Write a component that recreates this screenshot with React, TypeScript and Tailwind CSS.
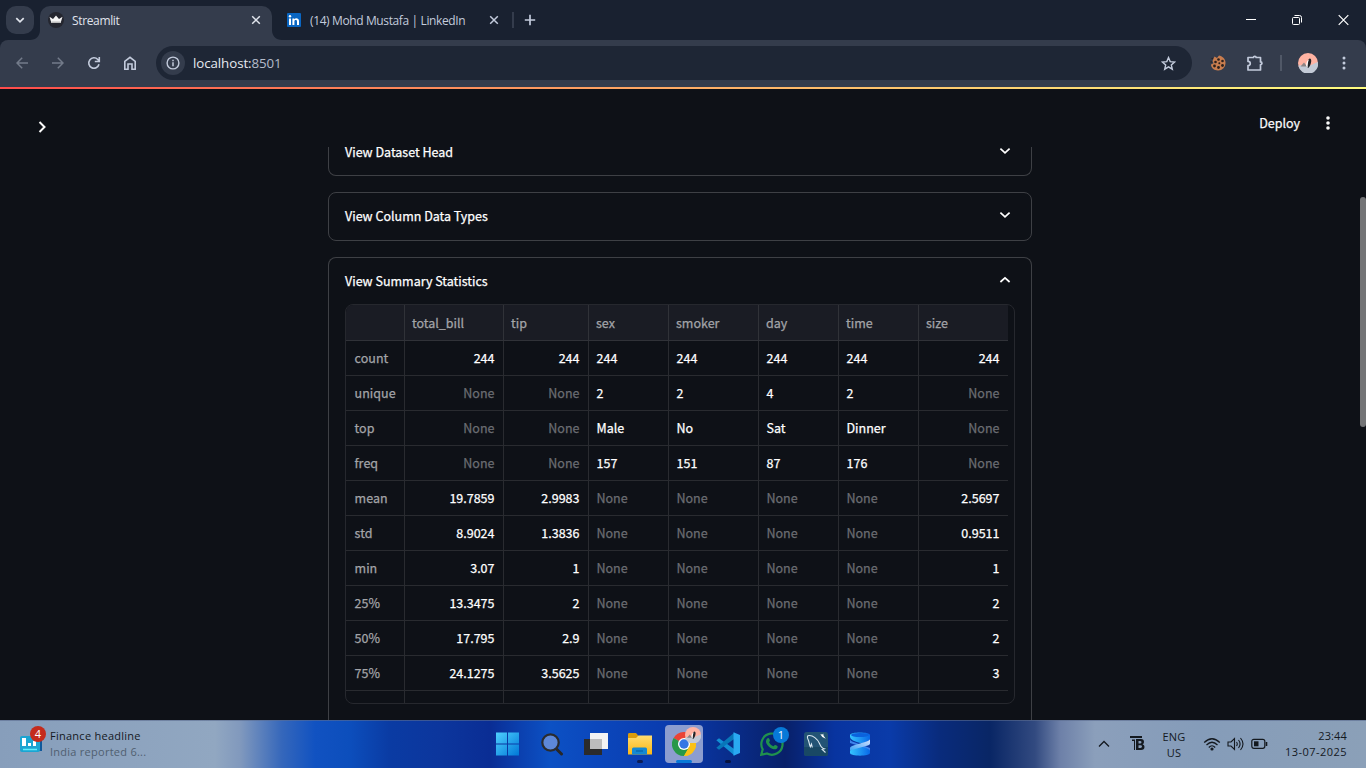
import React from "react";

const ICON = "fill-none stroke-current";

const Chevron = ({ up = false }: { up?: boolean }) => (
  <svg className={ICON} width="12" height="8" viewBox="0 0 12 8" strokeWidth="1.7">
    <path d={up ? "M1.4 6 6 1.8 10.6 6" : "M1.4 1.7 6 5.9 10.6 1.7"} />
  </svg>
);

const Close = () => (
  <svg className={ICON} width="10" height="10" viewBox="0 0 10 10" strokeWidth="1.5">
    <path d="M1.2 1.2 8.8 8.8M8.8 1.2 1.2 8.8" />
  </svg>
);

const Dots = ({ r, gap }: { r: number; gap: number }) => (
  <svg className="fill-current" width="6" height="18" viewBox="0 0 6 18">
    {[-1, 0, 1].map((i) => (
      <circle key={i} cx="3" cy={9 + i * gap} r={r} />
    ))}
  </svg>
);

const Avatar = ({ size }: { size: number }) => (
  <svg width={size} height={size} viewBox="0 0 20 20">
    <circle cx="10" cy="10" r="10" fill="#ffb3a3" />
    <path d="M.3 12.500C3 12.500 6 11.500 9 12.500S16 10.500 20 9A10 10 0 0 1 .3 12.500" fill="#c3cad6" />
    <path d="M2.500 13.500 6 9.500l3 4z" fill="#8c8485" />
    <path d="M10.500 6.500c1.500-2 3-.5 2.700 2-.4 3-1.300 5-3 6.500-1-.5-1.100-2-.6-4.500.3-2.200.4-3 .9-4" fill="#222529" />
    <path d="M10.900 6.800c-.9 2-1.400 4.600-1.300 7.700-1.700-1-1.700-3-1-5 .5-1.400 1.100-2.300 2.300-2.700" fill="#fff" />
  </svg>
);

function TabStrip() {
  return (
    <div className="flex h-10 shrink-0 items-start bg-[#192130] text-[12px] text-[#e0e4ec]">
      <button className="ml-[6px] mt-[6px] flex size-7 items-center justify-center rounded-[10px] bg-[#343c4c]">
        <svg className={ICON} width="10" height="7" viewBox="0 0 10 7" strokeWidth="1.7">
          <path d="M1.3 1.2 5 4.900 8.700 1.200" />
        </svg>
      </button>
      <svg className="ml-[-4px] mt-[30px] shrink-0" width="10" height="10" viewBox="0 0 10 10">
        <path d="M10 0v10H0C6 10 10 6 10 0" fill="#343c4c" />
      </svg>
      <div className="mt-[6px] flex h-[34px] w-[232px] items-center rounded-t-[10px] bg-[#343c4c] pb-[6px] pl-2 pr-[11px]">
        <svg width="16" height="16" viewBox="0 0 16 16">
          <circle cx="8" cy="8" r="8" fill="#24262f" />
          <path d="M1.500 4.800 5 7l3-3.500L11 7l3.500-2.200L12.600 11H3.400z" fill="#f5f5f5" />
          <path d="M3.400 9.500h9.200V11H3.400z" fill="#bbb" />
        </svg>
        <span className="ml-2 pt-px tracking-[-0.35px]">Streamlit</span>
        <span className="ml-auto"><Close /></span>
      </div>
      <svg className="mt-[30px] shrink-0" width="10" height="10" viewBox="0 0 10 10">
        <path d="M0 0v10h10C4 10 0 6 0 0" fill="#343c4c" />
      </svg>
      <div className="ml-[5px] mt-[6px] flex h-7 w-[225px] items-center text-[#c3cbdc]">
        <svg width="14" height="14" viewBox="0 0 14 14">
          <rect width="14" height="14" rx="1" fill="#0a66c2" />
          <path d="M2 5.400h2V12H2zM5.400 5.400h1.900v.9c1.200-1.900 4.700-1.400 4.700 1.700v4h-2V8.500c0-2-2.600-1.900-2.600 0V12h-2z" fill="#fff" />
          <circle cx="3" cy="3.200" r="1.200" fill="#fff" />
        </svg>
        <span className="ml-[9px] whitespace-nowrap pt-px tracking-[-0.38px]">(14) Mohd Mustafa | LinkedIn</span>
        <span className="ml-auto mr-[13px]"><Close /></span>
      </div>
      <div className="mt-3 h-4 w-[2px] bg-[#343c4c]" />
      <svg className={`ml-[10px] mt-[14px] text-[#c3cbdc] ${ICON}`} width="12" height="12" viewBox="0 0 12 12" strokeWidth="1.7">
        <path d="M6 .8v10.400M.8 6h10.400" />
      </svg>
      <div className="ml-auto mr-[17px] mt-[14px] flex h-3 items-center text-white">
        <svg className={ICON} width="10" height="12" viewBox="0 0 10 12"><path d="M0 5.500h10" /></svg>
        <svg className={`ml-9 ${ICON}`} width="11" height="12" viewBox="0 0 11 12">
          <rect x=".5" y="3.500" width="7" height="7" rx="1" />
          <path d="M2.500 1.500h5a2 2 0 0 1 2 2v5" />
        </svg>
        <svg className={`ml-[35px] ${ICON}`} width="11" height="12" viewBox="0 0 11 12" strokeWidth="1.2"><path d="m.7 1.200 9.600 9.600M10.300 1.200.7 10.800" /></svg>
      </div>
    </div>
  );
}

function Toolbar() {
  return (
    <div className="shrink-0 bg-[#192130]">
      <div className="flex h-[47px] items-center rounded-t-[8px] bg-[#343c4c] pb-px text-[#c3cbdc]">
        <svg className={`ml-4 text-[#737b8a] ${ICON}`} width="12" height="12" viewBox="0 0 12 12" strokeWidth="1.500"><path d="M12 6H1.200M6.200.8 1 6l5.200 5.200" /></svg>
        <svg className={`ml-6 text-[#737b8a] ${ICON}`} width="12" height="12" viewBox="0 0 12 12" strokeWidth="1.500"><path d="M0 6h10.800M5.800.8 11 6l-5.200 5.200" /></svg>
        <svg className={`ml-[23px] ${ICON}`} width="14" height="14" viewBox="0 0 14 14" strokeWidth="1.600">
          <path d="M12 8.300A5.200 5.200 0 1 1 10.800 3.500L12.400 5.200M12.300 1v4.500H7.800" />
        </svg>
        <svg className={`ml-[22px] ${ICON}`} width="14" height="14" viewBox="0 0 14 14" strokeWidth="1.600">
          <path d="M1.800 5.400 7 1.300l5.200 4.100v7.800H9V8H5v5.200H1.800z" />
        </svg>
        <div className="ml-[19px] flex h-[34px] w-[1036px] items-center rounded-full bg-[#1e2635] pl-[5px] pr-[16px]">
          <span className="flex size-6 items-center justify-center rounded-full bg-[#343c4c]">
            <svg className={ICON} width="14" height="14" viewBox="0 0 14 14" strokeWidth="1.400">
              <circle cx="7" cy="7" r="5.900" />
              <path d="M7 6.200v4M7 3.700v1.500" strokeWidth="1.500" />
            </svg>
          </span>
          <span className="ml-2 pt-[2px] text-[13.300px] tracking-[-0.07px] text-[#e6e9f0]">
            localhost:<span className="text-[#b4bccb]">8501</span>
          </span>
          <svg className={`ml-auto ${ICON}`} width="15" height="15" viewBox="0 0 15 15" strokeWidth="1.400">
            <path d="m7.500 1.600 1.700 4 4.400.4-3.300 2.900 1 4.300-3.800-2.300-3.800 2.300 1-4.300L1.400 6l4.400-.4z" />
          </svg>
        </div>
        <svg className="ml-[18px]" width="16" height="16" viewBox="0 0 16 16">
          <path d="M4.500 1.500 7 3l2-2.500c3 .3 6.500 3.500 6.500 7.200A7.300 7.300 0 0 1 8 15.500c-4 0-7-2.800-7-6l2.500-1.200L2.500 6z" fill="#c97d4e" />
          <g fill="#2b201d"><circle cx="8.500" cy="4.500" r="1.300" /><circle cx="12.500" cy="6" r="1.300" /><circle cx="5.500" cy="7" r="1.300" /><circle cx="9.300" cy="8.300" r="1" /><circle cx="4.500" cy="11" r="1.400" /><circle cx="8.500" cy="12.500" r="1.400" /><circle cx="12.500" cy="10.500" r="1.400" /><circle cx="2.200" cy="3.500" r=".8" /><circle cx="1.200" cy="7" r=".8" /></g>
        </svg>
        <svg className={`ml-[20px] ${ICON}`} width="18" height="18" viewBox="0 0 18 18" strokeWidth="1.700">
          <path d="M2 3.500h5.500c0-1.700 2.600-1.700 2.600 0h4.400v4.400c1.900 0 1.900 2.800 0 2.800v5.300H2v-4.400c3-.2 3-4 0-4.200z" strokeLinejoin="round" />
        </svg>
        <div className="ml-[16px] h-4 w-[2px] bg-[#505867]" />
        <span className="ml-4"><Avatar size={20} /></span>
        <span className="ml-[23px]"><Dots r={1.500} gap={5} /></span>
      </div>
    </div>
  );
}

const COLUMNS = [
  { name: "total_bill", numeric: true },
  { name: "tip", numeric: true },
  { name: "sex", numeric: false },
  { name: "smoker", numeric: false },
  { name: "day", numeric: false },
  { name: "time", numeric: false },
  { name: "size", numeric: true },
];

const N = null;
const ROWS: [string, (string | null)[]][] = [
  ["count", ["244", "244", "244", "244", "244", "244", "244"]],
  ["unique", [N, N, "2", "2", "4", "2", N]],
  ["top", [N, N, "Male", "No", "Sat", "Dinner", N]],
  ["freq", [N, N, "157", "151", "87", "176", N]],
  ["mean", ["19.7859", "2.9983", N, N, N, N, "2.5697"]],
  ["std", ["8.9024", "1.3836", N, N, N, N, "0.9511"]],
  ["min", ["3.07", "1", N, N, N, N, "1"]],
  ["25%", ["13.3475", "2", N, N, N, N, "2"]],
  ["50%", ["17.795", "2.9", N, N, N, N, "2"]],
  ["75%", ["24.1275", "3.5625", N, N, N, N, "3"]],
  ["", ["", "", "", "", "", "", ""]],
];

const GRID = "grid w-[662px] shrink-0 grid-cols-[59px_99px_85px_80px_90px_80px_80px_89px]";

function StatsTable() {
  return (
    <div className="flex h-[400px] w-[670px] flex-col overflow-hidden rounded-[8px] border border-[#26282e] text-[12.500px]">
      <div className={`${GRID} h-[36px] bg-[#1a1c24] text-[#a3a4a8]`}>
        <div className="border-b border-r border-[#303238]" />
        {COLUMNS.map((c, i) => (
          <div key={c.name} className={`flex items-center border-b border-[#303238] pl-[7px] pt-[2px] ${i < 6 ? "border-r" : ""}`}>
            {c.name}
          </div>
        ))}
      </div>
      {ROWS.map(([label, cells]) => (
        <div key={label} className={`${GRID} h-[35px]`}>
          <div className="flex items-center border-b border-r border-[#292b30] pl-[8.500px] tracking-[0.05px] text-[#a3a4a8]">{label}</div>
          {cells.map((v, i) => (
            <div
              key={i}
              className={`flex items-center border-b border-[#292b30] pl-[7.500px] pr-[8.500px] ${i < 6 ? "border-r" : ""} ${COLUMNS[i].numeric ? "justify-end" : ""} ${v === null ? "text-[#6b6d72]" : "text-white"}`}
            >
              {v === null ? "None" : v}
            </div>
          ))}
        </div>
      ))}
    </div>
  );
}

function StreamlitPage() {
  return (
    <div className="relative flex min-h-0 flex-1 flex-col bg-[#0e1117] font-['Noto_Sans_CJK_SC','Noto_Sans',sans-serif] text-[#fafafa] [-webkit-text-stroke:0.25px]">
      <div className="h-[2px] shrink-0 bg-linear-to-r from-[#ff4b4b] to-[#fffd80]" />
      <header className="flex h-[58px] shrink-0 items-start justify-between pl-[37px] pr-[35px]">
        <svg className={`mt-8 ${ICON}`} width="10" height="12" viewBox="0 0 10 12" strokeWidth="2"><path d="M2.500 1l5 5-5 5" /></svg>
        <div className="flex h-[68px] items-center">
          <span className="text-[12.500px] font-normal">Deploy</span>
          <span className="ml-[25px]"><Dots r={1.800} gap={5} /></span>
        </div>
      </header>
      <main className="flex min-h-0 flex-1 flex-col overflow-hidden pr-[6px] text-[12.500px] text-white">
        <div className="mx-auto flex w-[704px] shrink-0 flex-col">
          <section className="flex h-[29px] items-start justify-between rounded-b-[8px] border border-t-0 border-[#3e4045] pl-4 pr-5 leading-[10px]">
            <span>View Dataset Head</span>
            <Chevron />
          </section>
          <section className="mt-4 flex h-[49px] items-center justify-between rounded-[8px] border border-[#3e4045] pl-4 pr-5">
            <span>View Column Data Types</span>
            <span className="pb-[3px]"><Chevron /></span>
          </section>
          <section className="mt-4 h-[500px] rounded-t-[8px] border border-b-0 border-[#3e4045] px-4">
            <div className="flex h-[46px] items-center justify-between pr-1">
              <span>View Summary Statistics</span>
              <span className="pb-[2px]"><Chevron up /></span>
            </div>
            <StatsTable />
          </section>
        </div>
      </main>
      <div className="absolute right-0 top-[110px] h-[230px] w-[6px] rounded-full bg-[#737476]" />
    </div>
  );
}

const Slot = ({ children, active = false, mark = "" }: { children?: React.ReactNode; active?: boolean; mark?: string }) => (
  <div className={`relative flex h-[38px] w-[38px] shrink-0 items-center justify-center rounded-[4px] ${active ? "bg-[#8c9dcf]" : ""}`}>
    {children}
    {mark && <div className={`absolute bottom-0 h-[3px] rounded-full ${mark}`} />}
  </div>
);

function TaskbarApps() {
  return (
    <div className="ml-[343px] flex items-center gap-[6px]">
      <Slot>
        <svg width="24" height="24" viewBox="0 0 24 24">
          <defs><linearGradient id="win" x1="0" y1="0" x2="1" y2="1"><stop stopColor="#4fd0ff" /><stop offset="1" stopColor="#0078d7" /></linearGradient></defs>
          <path d="M0 .500h11v11H0zM12 .500h11v11H12zM0 12.500h11v11H0zM12 12.500h11v11H12z" fill="url(#win)" />
        </svg>
      </Slot>
      <Slot>
        <svg width="24" height="24" viewBox="0 0 24 24" fill="none">
          <path d="m16.500 17 5 5" stroke="#272727" strokeWidth="3" strokeLinecap="round" />
          <circle cx="10.500" cy="10.500" r="8.200" fill="#5d88d8" stroke="#292b2e" strokeWidth="2.200" />
        </svg>
      </Slot>
      <Slot>
        <svg width="24" height="24" viewBox="0 0 24 24">
          <path d="M0 7h18v16H0z" fill="#2b2b2b" /><path d="M6 1h18v16H6z" fill="#f3f3f3" /><path d="M6 7h12v10H6z" fill="#bdbdbd" />
        </svg>
      </Slot>
      <Slot mark="w-[6px] bg-[#0b1c55]">
        <svg width="24" height="24" viewBox="0 0 24 24">
          <defs><linearGradient id="fold" x1="0" y1="0" x2="0" y2="1"><stop stopColor="#ffdc70" /><stop offset="1" stopColor="#fcb714" /></linearGradient></defs>
          <path d="M0 2.500C0 1.500.5 1 1.500 1H8l2.500 3v5H0z" fill="#dc9c0b" />
          <path d="M0 6h8l2.500-2.500H24v19H0z" fill="url(#fold)" />
          <path d="M4 22.500V17q0-1.500 1.500-1.500h12Q19 15.500 19 17v5.500z" fill="#1489d4" /><path d="M8 19h7" stroke="#0762a9" strokeWidth="1.200" />
        </svg>
      </Slot>
      <Slot active mark="w-4 bg-[#0779d8]">
        <svg width="24" height="24" viewBox="0 0 24 24">
          <path d="M12 12 1.600 6A12 12 0 0 1 22.400 6z" fill="#ea4335" />
          <path d="M12 12V6h10.400A12 12 0 0 1 12 24z" fill="#fbc116" />
          <path d="M12 12 17.200 15 12 24A12 12 0 0 1 1.600 6z" fill="#279848" />
          <path d="M17.200 15 12 24A12 12 0 0 0 22.400 6H12z" fill="#fbc116" />
          <circle cx="12" cy="12" r="6" fill="#fff" /><circle cx="12" cy="12" r="4.700" fill="#3577e5" />
        </svg>
        <span className="absolute right-[2px] top-[2px]"><Avatar size={16} /></span>
      </Slot>
      <Slot mark="w-[6px] bg-[#08133f]">
        <svg width="24" height="24" viewBox="0 0 24 24">
          <path d="M.3 8.200 3 6.200 18.500 17.200v6.300z" fill="#128fd5" />
          <path d="M.3 15.800 3 17.800 18.500 6.800V.5z" fill="#0877b9" />
          <path d="M17.500.200 24 3v18l-6.500 2.800z" fill="#29a9f2" />
        </svg>
      </Slot>
      <Slot>
        <svg width="24" height="24" viewBox="0 0 24 24" fill="none">
          <path d="m1.200 22.800 1.500-5.500A10.600 10.600 0 1 1 7 21.500z" stroke="#20914d" strokeWidth="2.200" />
          <path d="M7.600 6.300c1.300-.8 1.800.8 2.300 2.200.2.700-.8 1.300-.8 1.700.8 1.900 2.300 3.300 4.300 4 .6 0 1.100-1.400 1.800-1.200 1.100.4 2.700 1 2.500 1.700-.3 2.600-2.600 3-5 2.200-3-1-5.500-3.500-6.500-6-.6-1.900.1-3.700 1.400-4.600" fill="#20914d" />
        </svg>
        <span className="absolute right-[2px] top-[2px] flex size-4 items-center justify-center rounded-full bg-[#0779d8] text-[11px] text-white">1</span>
      </Slot>
      <Slot>
        <svg width="24" height="24" viewBox="0 0 24 24" fill="none">
          <rect width="24" height="24" rx="2.500" fill="#235475" />
          <path d="M0 15h24v6.500q0 2.500-2.500 2.500h-19Q0 24 0 21.500z" fill="#194864" />
          <path d="M8.300 15.500 7.500 12 6.300 14.800C5 12 5.300 10.500 4.500 8.500 3.500 6.500 3.200 4.300 4 3.700 9 2.800 13.500 7 15.500 11.500c1 2.500 2.400 4.700 4.700 5.300l-2 .7 3.300 3" stroke="#d9e7f1" strokeWidth="1.100" />
          <path d="m16.300 2.300 2.200.2.700-1 .4 2.300 2.200 2.900-3.500-1.800z" fill="#fff" />
        </svg>
      </Slot>
      <Slot>
        <svg width="20" height="24" viewBox="1 0 20 24">
          <defs>
            <linearGradient id="ribbon" x1="0" y1="1" x2="1" y2="0"><stop stopColor="#3ba2f5" /><stop offset="1" stopColor="#d6e2ff" /></linearGradient>
            <linearGradient id="cap" x1="0" y1="0" x2="1" y2="0"><stop stopColor="#35c4ff" /><stop offset="1" stopColor="#0868e8" /></linearGradient>
          </defs>
          <path d="M1 3c0-3.500 20-3.500 20 0v4q0 2-8 4.500Q1 8.500 1 5z" fill="url(#cap)" />
          <path d="M1 21c0 3.500 20 3.500 20 0v-3q0-2-8-5Q1 16 1 19z" fill="url(#cap)" />
          <path d="M1 7q0 2 5 3.500l15 5.500v3q0-2-6-3.500L1 11z" fill="#3f83ec" />
          <path d="M1 19v-3q0-1.500 5-3L16 10q5-1.500 5-3v4.500q0 1.500-4 2.500L5 17.200Q1 18.200 1 19" fill="url(#ribbon)" />
          <ellipse cx="11" cy="3" rx="9" ry="2" fill="#0b62dd" />
        </svg>
      </Slot>
    </div>
  );
}

function Taskbar() {
  return (
    <div className="flex h-12 shrink-0 items-center border-t border-[#5b6d8f]/60 bg-[linear-gradient(90deg,#879ebb_0px,#91a7c1_215px,#8199bd_240px,#3567bb_282px,#1152c1_315px,#0c4ebc_350px,#0a3ba3_390px,#0c369d_440px,#0a2d94_490px,#0b40af_520px,#0c51c4_550px,#0b48bd_590px,#0a3bae_670px,#092f91_720px,#082069_785px,#0834a0_835px,#0a3ba9_890px,#092b7c_940px,#092665_990px,#324a80_1035px,#6d80a8_1060px,#8b9fbb_1095px,#859cb9_1200px,#8ba0b8_1366px)] pb-[2px] text-[11px] leading-[16px] text-[#14191f]">
      <div className="flex w-[146px] items-center">
        <div className="relative ml-5 h-6 w-[23px] shrink-0">
          <svg className="mt-[2px]" width="23" height="19" viewBox="0 0 23 19">
            <path d="M18 3h4v14h-4z" fill="#10599b" /><rect y="2" width="20" height="16" rx="2" fill="#1ca5d2" /><path d="M3 15.500h14" stroke="#5ef0ff" strokeWidth="1.500" /><path d="M2 4h4v8H2zM8 9h3v3H8zM13 7h3v5h-3z" fill="#fff" />
          </svg>
          <span className="absolute left-[10px] top-[-6px] flex size-4 items-center justify-center rounded-full bg-[#c42b1c] text-[11px] text-white">4</span>
        </div>
        <div className="ml-[7px] whitespace-nowrap tracking-[0.26px]">
          <div>Finance headline</div>
          <div className="text-[#505f70]">India reported 6...</div>
        </div>
      </div>
      <TaskbarApps />
      <div className="ml-auto mr-[19px] flex items-center">
        <svg className={ICON} width="12" height="8" viewBox="0 0 12 8" strokeWidth="1.300"><path d="M1 6.500 6 1.500l5 5" /></svg>
        <svg className="ml-5 fill-current" width="15" height="15" viewBox="0 0 15 15">
          <path d="M0 0h12v2H0zM2 3.500h3V14H4V5H2z" />
          <path fillRule="evenodd" d="M6 3h5q3 0 3 3 0 1.700-1.400 2.300Q14.500 9 14.500 10.800q0 3.200-3.500 3.200H6zM8.500 5v2.400H10q1.500 0 1.500-1.200T10 5zM8.500 9.200V12h2q1.500 0 1.500-1.400t-1.500-1.400z" />
        </svg>
        <div className="ml-[15px] w-7 pt-[2px] text-center tracking-[0.15px]"><div>ENG</div><div>US</div></div>
        <svg className={`ml-[15px] ${ICON}`} width="18" height="14" viewBox="0 0 18 14" strokeWidth="1.200">
          <path d="M1.200 5.500Q9-2 16.800 5.500M3.500 8Q9 2.500 14.500 8M5.800 10.500Q9 7 12.200 10.500" /><circle cx="9" cy="12" r="1" fill="currentColor" />
        </svg>
        <svg className={`ml-[6px] ${ICON}`} width="18" height="14" viewBox="0 0 18 14" strokeWidth="1.100">
          <path d="M1 5h3l3.500-3.500v11L4 9H1zM9.500 5q1.500 2 0 4M11.500 3q3.200 4 0 8M13.500 1q5 6 0 12" />
        </svg>
        <svg className={`ml-[6px] ${ICON}`} width="17" height="12" viewBox="0 0 17 12" strokeWidth="1.200">
          <rect x=".8" y="1.300" width="13" height="9" rx="2" /><path d="M3 3.300h4.500v5H3z" fill="currentColor" stroke="none" /><path d="M15.500 4v4" strokeWidth="1.600" />
        </svg>
        <div className="ml-4 w-[63px] whitespace-nowrap"><div className="flex justify-end tracking-[0.15px]">23:44</div><div className="flex justify-end tracking-[0.45px]">13-07-2025</div></div>
      </div>
    </div>
  );
}

export default function App() {
  return (
    <div className="flex h-[768px] w-[1366px] flex-col overflow-hidden font-['Open_Sans','Noto_Sans',sans-serif]">
      <TabStrip />
      <Toolbar />
      <StreamlitPage />
      <Taskbar />
    </div>
  );
}
